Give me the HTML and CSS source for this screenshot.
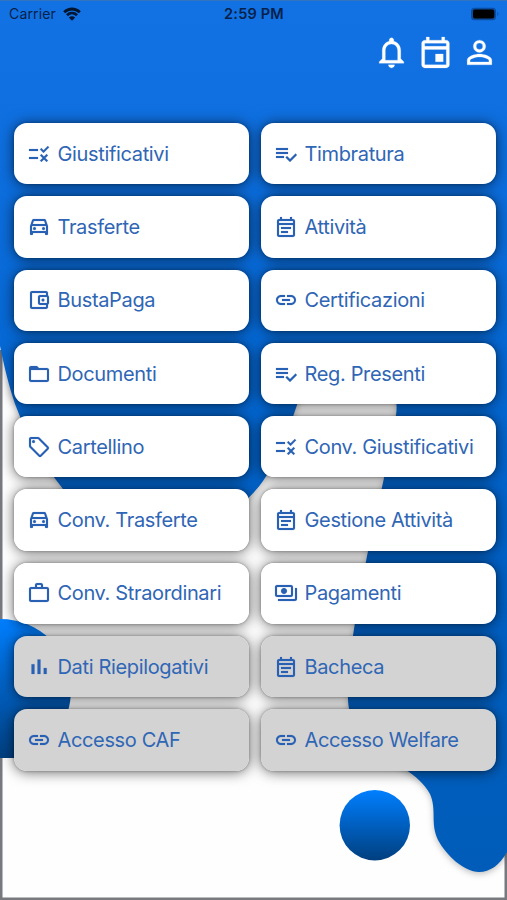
FILE: index.html
```html
<!DOCTYPE html>
<html lang="it">
<head>
    <meta charset="UTF-8">
    <title>Home</title>
    <link rel="stylesheet" href="styles.css">
</head>
<body>
    <!-- icon set -->
    <svg class="icon-defs" width="0" height="0">
        <symbol id="rule" viewBox="0 0 24 24"><path d="M16.54 11L13 7.46l1.41-1.41 2.12 2.12 4.24-4.24 1.41 1.41L16.54 11zM11 7H2v2h9V7zm10 6.41L19.59 12 17 14.59 14.41 12 13 13.41 15.59 16 13 18.59 14.41 20 17 17.41 19.59 20 21 18.59 18.41 16 21 13.41zM11 15H2v2h9v-2z"/></symbol>
        <symbol id="check" viewBox="0 0 24 24"><path d="M14 10H2v2h12v-2zm0-4H2v2h12V6zM2 16h8v-2H2v2zm19.5-4.5L23 13l-6.99 7-4.51-4.5L13 14l3.01 3 5.49-5.5z"/></symbol>
        <symbol id="car" viewBox="0 0 24 24"><path d="M18.92 5.01C18.72 4.42 18.16 4 17.5 4h-11c-.66 0-1.21.42-1.42 1.01L3 11v8c0 .55.45 1 1 1h1c.55 0 1-.45 1-1v-1h12v1c0 .55.45 1 1 1h1c.55 0 1-.45 1-1v-8l-2.08-5.99zM6.85 6h10.29l1.08 3.11H5.77L6.85 6zM19 16H5v-5h14v5z"/><circle cx="7.5" cy="13.5" r="1.5"/><circle cx="16.5" cy="13.5" r="1.5"/></symbol>
        <symbol id="note" viewBox="0 0 24 24"><path d="M19 4h-1V2h-2v2H8V2H6v2H5c-1.11 0-1.99.9-1.99 2L3 20c0 1.1.89 2 2 2h14c1.1 0 2-.9 2-2V6c0-1.1-.9-2-2-2zm0 16H5V10h14v10zm0-12H5V6h14v2zM7 12h10v2H7v-2zm0 4h7v2H7z"/></symbol>
        <symbol id="wallet" viewBox="0 0 24 24"><path d="M21 7.28V5c0-1.1-.9-2-2-2H5c-1.11 0-2 .9-2 2v14c0 1.1.89 2 2 2h14c1.1 0 2-.9 2-2v-2.28c.59-.35 1-.98 1-1.72V9c0-.74-.41-1.37-1-1.72zM20 9v6h-7V9h7zM5 19V5h14v2h-6c-1.1 0-2 .9-2 2v6c0 1.1.9 2 2 2h6v2H5z"/><circle cx="16" cy="12" r="1.5"/></symbol>
        <symbol id="link" viewBox="0 0 24 24"><path d="M3.9 12c0-1.71 1.39-3.1 3.1-3.1h4V7H7c-2.76 0-5 2.24-5 5s2.24 5 5 5h4v-1.9H7c-1.71 0-3.1-1.39-3.1-3.1zM8 13h8v-2H8v2zm9-6h-4v1.9h4c1.71 0 3.1 1.39 3.1 3.1s-1.39 3.1-3.1 3.1h-4V17h4c2.76 0 5-2.24 5-5s-2.24-5-5-5z"/></symbol>
        <symbol id="folder" viewBox="0 0 24 24"><path d="M20 6h-8l-2-2H4c-1.1 0-1.99.9-1.99 2L2 18c0 1.1.9 2 2 2h16c1.1 0 2-.9 2-2V8c0-1.1-.9-2-2-2zm0 12H4V8h16v10z"/></symbol>
        <symbol id="tag" viewBox="0 0 24 24"><path d="M21.41 11.58l-9-9C12.05 2.22 11.55 2 11 2H4c-1.1 0-2 .9-2 2v7c0 .55.22 1.05.59 1.42l9 9c.36.36.86.58 1.41.58s1.05-.22 1.41-.59l7-7c.37-.36.59-.86.59-1.41s-.23-1.06-.59-1.42zM13 20.01L4 11V4h7v-.01l9 9-7 7.02z"/><circle cx="6.5" cy="6.5" r="1.5"/></symbol>
        <symbol id="work" viewBox="0 0 24 24"><path d="M14 6V4h-4v2h4zM4 8v11h16V8H4zm16-2c1.11 0 2 .89 2 2v11c0 1.11-.89 2-2 2H4c-1.11 0-2-.89-2-2l.01-11c0-1.11.88-2 1.99-2h4V4c0-1.11.89-2 2-2h4c1.11 0 2 .89 2 2v2h4z"/></symbol>
        <symbol id="payments" viewBox="0 0 24 24"><path d="M19 14V6c0-1.1-.9-2-2-2H3c-1.1 0-2 .9-2 2v8c0 1.1.9 2 2 2h14c1.1 0 2-.9 2-2zm-2 0H3V6h14v8zm-7-7c-1.66 0-3 1.34-3 3s1.34 3 3 3 3-1.34 3-3-1.34-3-3-3zm13 0v11c0 1.1-.9 2-2 2H4v-2h17V7h2z"/></symbol>
        <symbol id="chart" viewBox="0 0 24 24"><path d="M4.5 9.2h3V19h-3zM10.5 4.5h3V19h-3zm6.2 8.5h3v6h-3z"/></symbol>
        <symbol id="bell" viewBox="0 0 24 24"><path d="M12 22c1.1 0 2-.9 2-2h-4c0 1.1.9 2 2 2zm6-6v-5c0-3.07-1.63-5.64-4.5-6.32V4c0-.83-.67-1.5-1.5-1.5s-1.5.67-1.5 1.5v.68C7.64 5.36 6 7.92 6 11v5l-2 2v1h16v-1l-2-2zm-2 1H8v-6c0-2.48 1.51-4.5 4-4.5s4 2.02 4 4.5v6z"/></symbol>
        <symbol id="event" viewBox="0 0 24 24"><path d="M19 4h-1V2h-2v2H8V2H6v2H5c-1.11 0-1.99.9-1.99 2L3 20c0 1.1.89 2 2 2h14c1.1 0 2-.9 2-2V6c0-1.1-.9-2-2-2zm0 16H5V10h14v10zm0-12H5V6h14v2zM12 13h5v5h-5z"/></symbol>
        <symbol id="person" viewBox="0 0 24 24"><path d="M12 5.9a2.1 2.1 0 1 1 0 4.2 2.1 2.1 0 0 1 0-4.2m0 9c2.97 0 6.1 1.46 6.1 2.1v1.1H5.9V17c0-.64 3.13-2.1 6.1-2.1M12 4C9.79 4 8 5.79 8 8s1.79 4 4 4 4-1.79 4-4-1.79-4-4-4zm0 9c-2.67 0-8 1.34-8 4v3h16v-3c0-2.66-5.33-4-8-4z"/></symbol>
    </svg>

    <div class="screen">
        <svg class="background" viewBox="0 0 507 900">
            <defs>
                <linearGradient id="sky" x1="0" y1="0" x2="0" y2="1">
                    <stop offset="0" stop-color="#1272e4"/>
                    <stop offset=".1" stop-color="#1070e1"/>
                    <stop offset=".4" stop-color="#0668d4"/>
                    <stop offset=".65" stop-color="#0060c4"/>
                    <stop offset="1" stop-color="#005cb8"/>
                </linearGradient>
                <linearGradient id="ball" x1="0" y1="0" x2="0" y2="1">
                    <stop offset="0" stop-color="#007fff"/>
                    <stop offset="1" stop-color="#003f7f"/>
                </linearGradient>
            </defs>
            <rect width="507" height="900" fill="#fefefe"/>
            <path class="edge" d="M1 350V899H506V840"/>
            <path class="wave" fill="url(#sky)" d="M0 0H507V852C500 865 490 872 479 872C464 872 446 855 438 840C430 823 437 810 430 794C424 783 415 776 406 770C366 745 349 725 348 700C347 665 354 626 367 556L384 478L396 415C400 388 385 376 350 376C318 376 304 388 297 405C286 438 276 462 263 481C235 520 195 532 150 530C115 527 82 512 63 489C43 464 27 436 15 404C9 386 5 370 0 346Z"/>
            <path fill="url(#ball)" d="M0 619C40 619 71 650 71 690C71 720 53 747 26 758H0Z"/>
            <circle cx="374.8" cy="825.2" r="35.2" fill="url(#ball)"/>
            <path d="M0 .5H507" stroke="#3474bd"/>
        </svg>

        <div class="status-bar">
            <div class="carrier">
                <span>Carrier</span>
                <svg class="wifi" viewBox="0 0 18 14">
                    <path d="M1.2 5.2C5.7.9 12.3.9 16.8 5.2M4 8.2C6.9 5.5 11.1 5.5 14 8.2"/>
                    <path class="wifi-dot" d="M5.8 10.5C7.6 8.9 10.4 8.9 12.2 10.5L9 13.7Z"/>
                </svg>
            </div>
            <span class="clock">2:59 PM</span>
            <svg class="battery" viewBox="0 0 30 14">
                <rect x="1" y=".7" width="25" height="12.6" rx="3.5" fill="#0a4c9e"/>
                <rect x="3" y="2.6" width="21.3" height="8.8" rx="2" fill="#000"/>
                <path d="M27.4 5q2 2 0 4z" fill="#0a4c9e"/>
            </svg>
        </div>

        <div class="toolbar">
            <svg><use href="#bell"/></svg>
            <svg><use href="#event"/></svg>
            <svg><use href="#person"/></svg>
        </div>

        <div class="menu">
            <div class="card"><svg><use href="#rule"/></svg><span>Giustificativi</span></div>
            <div class="card"><svg><use href="#check"/></svg><span>Timbratura</span></div>
            <div class="card"><svg><use href="#car"/></svg><span>Trasferte</span></div>
            <div class="card"><svg><use href="#note"/></svg><span>Attività</span></div>
            <div class="card"><svg><use href="#wallet"/></svg><span>BustaPaga</span></div>
            <div class="card"><svg><use href="#link"/></svg><span>Certificazioni</span></div>
            <div class="card"><svg><use href="#folder"/></svg><span>Documenti</span></div>
            <div class="card"><svg><use href="#check"/></svg><span>Reg. Presenti</span></div>
            <div class="card"><svg><use href="#tag"/></svg><span>Cartellino</span></div>
            <div class="card"><svg><use href="#rule"/></svg><span>Conv. Giustificativi</span></div>
            <div class="card"><svg><use href="#car"/></svg><span>Conv. Trasferte</span></div>
            <div class="card"><svg><use href="#note"/></svg><span>Gestione Attività</span></div>
            <div class="card"><svg><use href="#work"/></svg><span>Conv. Straordinari</span></div>
            <div class="card"><svg><use href="#payments"/></svg><span>Pagamenti</span></div>
            <div class="card disabled"><svg><use href="#chart"/></svg><span>Dati Riepilogativi</span></div>
            <div class="card disabled"><svg><use href="#note"/></svg><span>Bacheca</span></div>
            <div class="card disabled"><svg><use href="#link"/></svg><span>Accesso CAF</span></div>
            <div class="card disabled"><svg><use href="#link"/></svg><span>Accesso Welfare</span></div>
        </div>
    </div>
</body>
</html>
```
FILE: styles.css
```css
body {
    margin: 0;
    font-family: Inter, "Liberation Sans", sans-serif;
}
.icon-defs {
    display: none;
}
.screen {
    position: relative;
    width: 507px;
    height: 900px;
    overflow: hidden;
}
.background {
    position: absolute;
    inset: 0;
    width: 100%;
    height: 100%;
    z-index: -1;
}
.edge {
    fill: none;
    stroke: #77797f;
    stroke-width: 3;
}
.wave {
    filter: drop-shadow(0 2px 3px rgba(0,0,0,0.25));
}
.status-bar {
    display: grid;
    grid-template-columns: 1fr auto 1fr;
    align-items: center;
    height: 27px;
    padding: 0 7px 0 9px;
    font-size: 14px;
    color: #06214a;
}
.carrier {
    display: flex;
    align-items: center;
    gap: 7px;
    letter-spacing: 0.15px;
}
.wifi {
    width: 18px;
    height: 14px;
    fill: none;
    stroke: #03152f;
    stroke-width: 2.8;
}
.wifi .wifi-dot {
    fill: #03152f;
    stroke: none;
}
.clock {
    margin-left: -1px;
    font-size: 14.5px;
    font-weight: 600;
    letter-spacing: 0.2px;
}
.battery {
    justify-self: end;
    width: 30px;
    height: 14px;
}
.toolbar {
    display: flex;
    justify-content: flex-end;
    gap: 7px;
    height: 37px;
    padding: 7px 9.5px 0 0;
}
.toolbar svg {
    width: 37px;
    height: 37px;
    fill: #fff;
    stroke: #fff;
    stroke-width: 0.15;
}
.menu {
    position: relative;
    z-index: 0;
    display: grid;
    grid-template-columns: 235px 235px;
    grid-auto-rows: 61.3px;
    gap: 12px;
    padding: 52px 11px 0 14px;
}
.card {
    position: relative;
    display: flex;
    align-items: center;
    gap: 7px;
    padding-left: 12.5px;
    border-radius: 13px;
    background-color: #fff;
    color: #2f66b5;
    font-size: 20px;
    letter-spacing: -0.35px;
    white-space: nowrap;
}
/* shadow stays below the neighbouring cards */
.card::before {
    content: "";
    position: absolute;
    inset: 0;
    z-index: -1;
    border-radius: 13px;
    box-shadow: 0 1px 14px rgba(0,0,0,0.6), 0 0 3px rgba(0,0,0,0.3);
}
.card svg {
    width: 24px;
    height: 24px;
    flex: none;
    fill: #2861b4;
    stroke: #2861b4;
    stroke-width: 0.15;
}
.disabled {
    background-color: #d3d3d3;
}
```
